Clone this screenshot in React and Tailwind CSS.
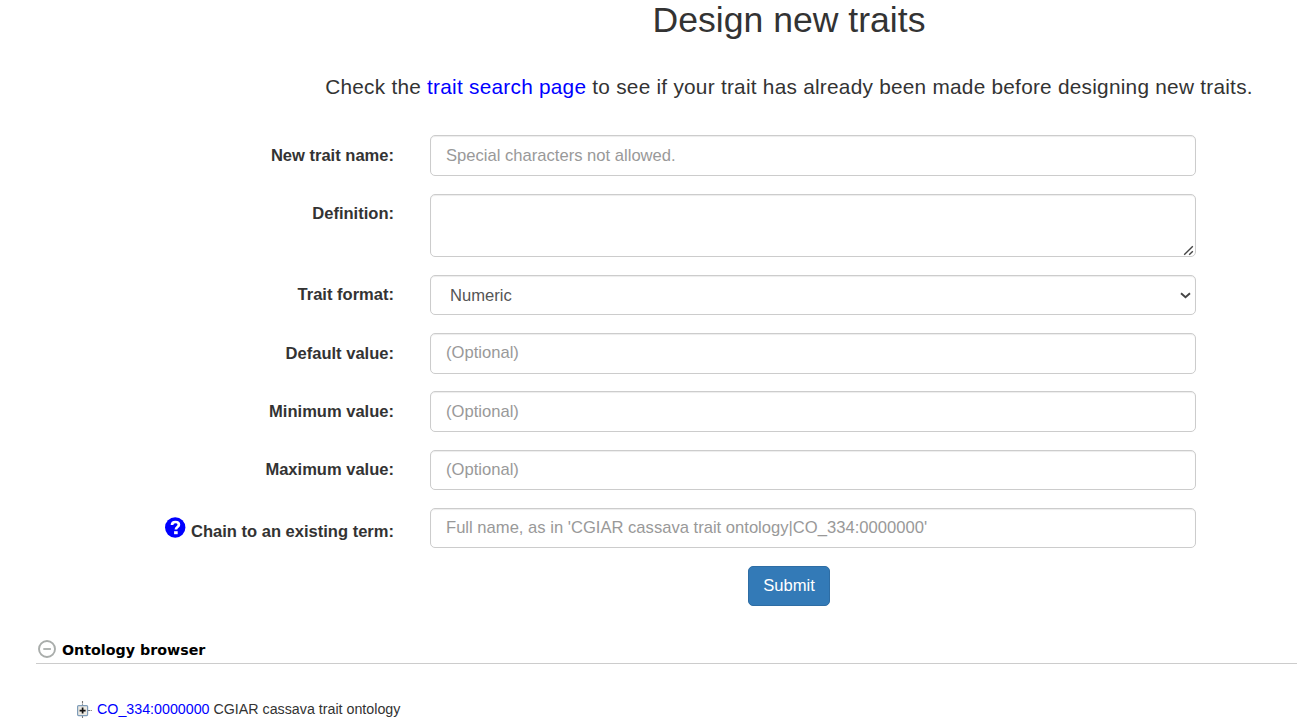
import React from "react";

const control =
  "block w-[766px] rounded-[5px] border border-[#ccc] bg-white px-[15px] text-[16.6px] text-[#555] placeholder-[#999] shadow-[inset_0_1px_1px_rgba(0,0,0,0.075)] outline-none";

function Row({ label, className, labelClass = "pt-[9px]", children }) {
  return (
    <div className={`flex items-start ${className}`}>
      <label className={`flex w-[394px] justify-end text-[16.55px] leading-6 font-bold whitespace-nowrap ${labelClass}`}>
        {label}
      </label>
      <div className="relative ml-9">{children}</div>
    </div>
  );
}

function HelpIcon() {
  return (
    <svg className="mr-[5px] h-[21px] w-[21px]" viewBox="0 0 21 21">
      <circle cx="10.2" cy="10.5" r="10.2" fill="#0000ff" />
      <path d="M7 8.1C7 5.7 8.2 5 10.4 5S13.9 6.1 13.9 7.7C13.9 9.9 10.9 10 10.9 12.4" fill="none" stroke="#fff" strokeWidth="2.7" />
      <rect x="9.1" y="14.2" width="3.6" height="3" fill="#fff" />
    </svg>
  );
}

function CollapseIcon() {
  return (
    <svg className="h-[18px] w-[18px]" viewBox="0 0 18 18" fill="none" stroke="#a9adab">
      <circle cx="9" cy="9" r="8" strokeWidth="1.9" />
      <path d="M5.3 9h7.6" strokeWidth="1.8" />
    </svg>
  );
}

function TreeNodeIcon() {
  return (
    <svg className="h-[18px] w-[17px] shrink-0" viewBox="0 0 17 18" fill="none">
      <path d="M6.5 1v4M6.5 16v2M12 10.5h4" stroke="#777" strokeWidth="1.1" strokeDasharray="2.4 0.8" />
      <rect x="1.6" y="5.6" width="10" height="10" rx="1" fill="#ece9e2" stroke="#7f9db9" strokeWidth="1.2" />
      <path d="M3.6 10.6h6M6.6 7.6v6" stroke="#111" strokeWidth="1.7" />
    </svg>
  );
}

export default function App() {
  return (
    <main className="h-[718px] w-[1297px] overflow-hidden bg-white font-['Liberation_Sans',Arial,sans-serif] text-[#333]">
      <h1 className="h-[74px] pl-[281px] text-center text-[35.6px] leading-[40px] font-normal">Design new traits</h1>
      <p className="h-[61px] pl-[281px] text-center text-[20.8px] leading-[26px] tracking-[0.25px] whitespace-nowrap">
        Check the <a href="#" className="text-[#0000ff]">trait search page</a> to see if your trait has already been made before designing new traits.
      </p>
      <form>
        <Row label="New trait name:" className="h-[59px]">
          <input className={`${control} h-[41px]`} placeholder="Special characters not allowed." />
        </Row>
        <Row label="Definition:" className="h-[81px]" labelClass="pt-[8px]">
          <textarea className={`${control} h-[63px] resize-none`} />
          <svg className="pointer-events-none absolute right-[2px] bottom-[1px] h-[11px] w-[11px]" viewBox="0 0 11 11" stroke="#444" strokeWidth="1.4">
            <path d="M1.2 9.8L9.8 1.2M6.2 9.8L9.8 6.2" />
          </svg>
        </Row>
        <Row label="Trait format:" className="h-[58px]" labelClass="pt-[8px]">
          <select className={`${control} h-10 appearance-none pt-[2px] pl-[19px]`} defaultValue="Numeric">
            <option>Numeric</option>
          </select>
          <svg className="pointer-events-none absolute top-[17px] right-[5px] h-[7px] w-[11px]" viewBox="0 0 11 7" fill="none" stroke="#444" strokeWidth="1.9">
            <path d="M1 1.2L5.5 5.2L10 1.2" />
          </svg>
        </Row>
        <Row label="Default value:" className="h-[58px]">
          <input className={`${control} h-[41px] pb-[2px]`} placeholder="(Optional)" />
        </Row>
        <Row label="Minimum value:" className="h-[59px]">
          <input className={`${control} h-[41px]`} placeholder="(Optional)" />
        </Row>
        <Row label="Maximum value:" className="h-[58px]" labelClass="pt-[8px]">
          <input className={`${control} h-10`} placeholder="(Optional)" />
        </Row>
        <Row
          label={<><HelpIcon /><span className="pt-[3px]">Chain to an existing term:</span></>}
          className="h-[58px]"
          labelClass="pt-[9px]"
        >
          <input className={`${control} h-10`} placeholder="Full name, as in 'CGIAR cassava trait ontology|CO_334:0000000'" />
        </Row>
        <div className="flex h-[73px] items-start pl-[748px]">
          <button type="button" className="h-10 w-[82px] rounded-[5px] border border-[#2e6da4] bg-[#337ab7] text-[16.6px] text-white">
            Submit
          </button>
        </div>
      </form>
      <section>
        <div className="ml-9 flex h-[25px] items-start gap-[6px] border-b border-[#ccc] pt-px pl-[2px]">
          <CollapseIcon />
          <h2 className="font-['DejaVu_Sans',Verdana,sans-serif] text-[14.25px] leading-[20px] font-bold text-black">Ontology browser</h2>
        </div>
        <div className="flex items-start pt-[36px] pl-[76px] text-[14.25px] leading-[18px] whitespace-nowrap">
          <TreeNodeIcon />
          <p className="ml-[4px]"><a href="#" className="text-[#0000ff]">CO_334:0000000</a> CGIAR cassava trait ontology</p>
        </div>
      </section>
    </main>
  );
}
